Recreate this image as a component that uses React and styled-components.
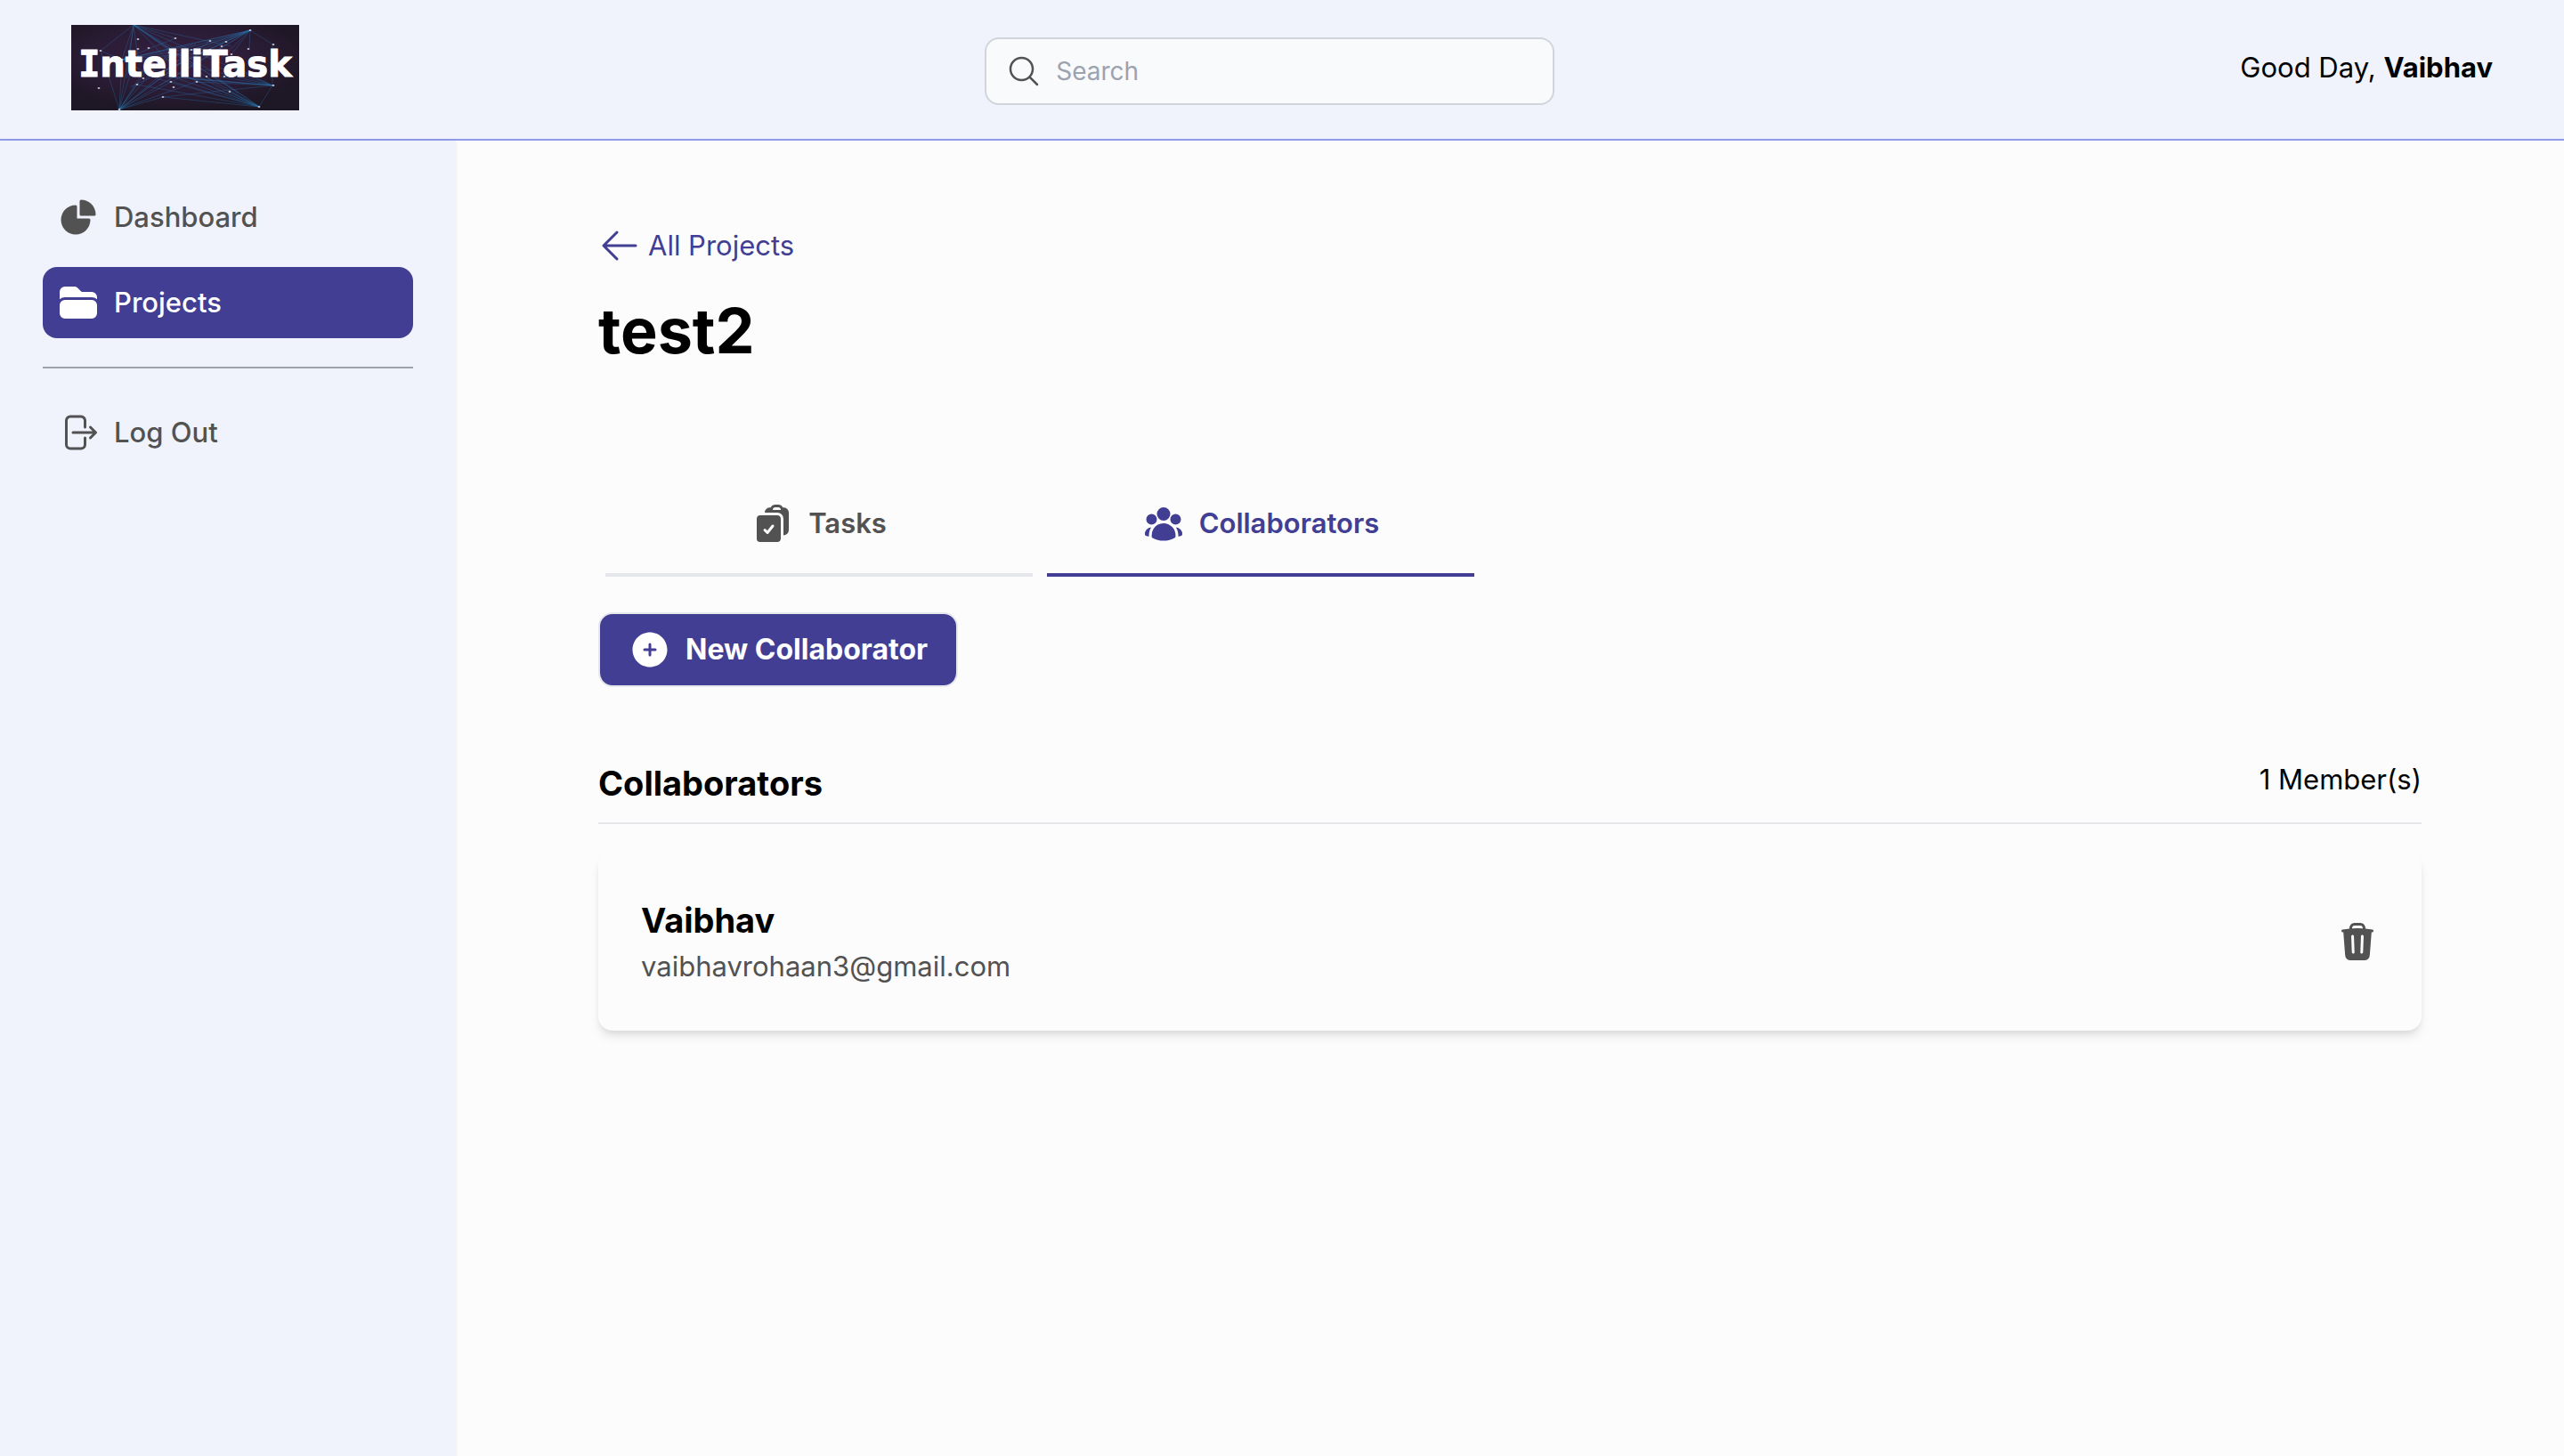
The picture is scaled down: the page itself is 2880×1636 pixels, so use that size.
import React from "react";
import styled, { createGlobalStyle } from "styled-components";
import {
  HiChartPie,
  HiFolder,
  HiOutlineArrowRightOnRectangle,
  HiOutlineArrowLeft,
  HiOutlineMagnifyingGlass,
  HiClipboardDocumentCheck,
  HiUserGroup,
  HiPlusCircle,
  HiTrash,
} from "react-icons/hi2";

const color = {
  brand: "#413e93",
  panel: "#f0f3fc",
  page: "#fcfcfc",
  muted: "#525252",
  line: "#e5e7eb",
};

const GlobalStyle = createGlobalStyle`
  *, *::before, *::after { box-sizing: border-box; }
  body {
    margin: 0;
    background: ${color.page};
    color: #000;
    font-family: Inter, "Liberation Sans", sans-serif;
    font-size: 31px;
    line-height: 48px;
  }
  h1, h2, h3, p, ul { margin: 0; padding: 0; }
  ul { list-style: none; }
  a { color: inherit; text-decoration: none; }
  button, input { font: inherit; }
  svg { display: block; flex: none; }
`;

const Page = styled.div`
  display: flex;
  flex-direction: column;
  min-height: 100vh;
`;

const Header = styled.header`
  display: flex;
  align-items: center;
  justify-content: space-between;
  padding: 28px 80px 32px;
  background: ${color.panel};
  border-bottom: 2px solid #8f9be8;
`;

const SearchBox = styled.label`
  display: flex;
  align-items: center;
  gap: 16px;
  width: 640px;
  height: 76px;
  margin-top: 8px;
  padding: 0 22px;
  background: #f9fafb;
  border: 2px solid #d1d5db;
  border-radius: 16px;
  color: ${color.muted};
`;

const SearchInput = styled.input`
  flex: 1;
  min-width: 0;
  padding: 0;
  border: 0;
  outline: 0;
  background: transparent;
  font-size: 28px;
  line-height: 40px;
  &::placeholder { color: #9ca3af; opacity: 1; }
`;

const Body = styled.div`
  display: flex;
  flex: 1;
`;

const Sidebar = styled.nav`
  flex: none;
  width: 512px;
  padding: 46px 48px;
  background: ${color.panel};
  box-shadow: 0 2px 4px rgba(0, 0, 0, 0.08);
`;

const NavList = styled.ul`
  display: grid;
  gap: 16px;
  & + & {
    margin-top: 32px;
    padding-top: 32px;
    border-top: 2px solid #9ca3af;
  }
`;

const NavLink = styled.a`
  display: flex;
  align-items: center;
  gap: 16px;
  padding: 16px;
  border-radius: 16px;
  font-weight: 500;
  background: ${(p) => (p.$active ? color.brand : "transparent")};
  && { color: ${(p) => (p.$active ? "#fff" : color.muted)}; }
`;

const Main = styled.main`
  flex: 1;
  min-width: 0;
  padding: 94px 160px;
`;

const BackLink = styled.a`
  display: flex;
  align-items: center;
  gap: 8px;
  width: fit-content;
  && { color: ${color.brand}; }
`;

const Title = styled.h1`
  margin-top: 32px;
  font-size: 70px;
  line-height: 80px;
  font-weight: 700;
`;

const Tabs = styled.div`
  display: flex;
  gap: 16px;
  margin-top: 120px;
  padding: 0 8px;
`;

const Tab = styled.button`
  display: flex;
  align-items: center;
  justify-content: center;
  gap: 16px;
  width: 480px;
  padding: 32px 0;
  border: 0;
  border-bottom: 4px solid ${(p) => (p.$active ? color.brand : color.line)};
  background: transparent;
  color: ${(p) => (p.$active ? color.brand : color.muted)};
  font-weight: 600;
`;

const PrimaryButton = styled.button`
  display: flex;
  align-items: center;
  gap: 16px;
  margin-top: 40px;
  padding: 16px 32px;
  background: ${color.brand};
  border: 2px solid ${color.line};
  border-radius: 16px;
  color: #fff;
  font-size: 32px;
  font-weight: 700;
`;

const SectionHeader = styled.div`
  display: flex;
  justify-content: space-between;
  align-items: flex-start;
  margin-top: 80px;
  padding-bottom: 16px;
  border-bottom: 2px solid ${color.line};
`;

const SectionTitle = styled.h2`
  font-size: 38px;
  line-height: 56px;
  font-weight: 700;
`;

const Card = styled.article`
  display: flex;
  align-items: center;
  justify-content: space-between;
  margin-top: 32px;
  padding: 48px;
  background: ${color.page};
  border-radius: 16px;
  box-shadow: 0 8px 12px -2px rgba(0, 0, 0, 0.1), 0 4px 8px -4px rgba(0, 0, 0, 0.1);
`;

const MemberName = styled.h3`
  font-size: 38px;
  line-height: 56px;
  font-weight: 700;
`;

const MemberEmail = styled.p`
  color: ${color.muted};
`;

const IconButton = styled.button`
  padding: 0;
  border: 0;
  background: transparent;
  color: ${color.muted};
`;

const hubs = [
  { at: [70, 0], spread: [[33, 29], [57, 39], [75, 38], [110, 41], [140, 48], [160, 64], [188, 77], [212, 92], [226, 68], [117, 15], [180, 24], [62, 60], [172, 60]] },
  { at: [201, 6], spread: [[57, 39], [80, 46], [92, 57], [112, 31], [126, 31], [145, 28], [160, 46], [180, 33], [200, 27], [66, 70], [100, 68], [135, 36], [228, 23]] },
  { at: [54, 95], spread: [[57, 39], [70, 2], [75, 27], [85, 46], [94, 38], [110, 31], [126, 40], [135, 28], [140, 64], [156, 18], [201, 6], [120, 60], [33, 29], [74, 67], [103, 81]] },
  { at: [211, 92], spread: [[95, 60], [110, 50], [115, 64], [130, 58], [141, 57], [152, 59], [165, 60], [103, 81], [178, 75], [74, 67], [226, 68], [90, 50]] },
  { at: [226, 68], spread: [[92, 57], [115, 58], [137, 61], [150, 50], [160, 46], [172, 59], [226, 23], [175, 43], [103, 81], [140, 64]] },
  { at: [57, 39], spread: [[110, 31], [126, 40], [117, 15], [140, 22], [160, 30], [201, 6], [33, 29], [95, 60]] },
];

const stars = [
  [33, 29], [75, 16], [117, 15], [156, 18], [174, 19], [201, 6], [227, 22], [65, 30], [75, 27],
  [87, 26], [110, 31], [127, 31], [135, 28], [169, 24], [180, 33], [199, 27], [156, 28], [57, 39],
  [94, 37], [31, 71], [74, 67], [81, 60], [112, 64], [115, 58], [142, 57], [152, 58], [141, 64],
  [172, 58], [178, 75], [227, 68], [103, 81], [211, 92], [54, 95], [115, 70],
];

function Logo() {
  return (
    <svg width="256" height="96" viewBox="0 0 256 96" role="img" aria-label="IntelliTask">
      <defs>
        <radialGradient id="night" cx="0.45" cy="0.4" r="0.6">
          <stop offset="0" stopColor="#352142" />
          <stop offset="0.6" stopColor="#2b1c36" />
          <stop offset="1" stopColor="#1e1725" />
        </radialGradient>
      </defs>
      <rect width="256" height="96" fill="url(#night)" />
      {hubs.map(({ at, spread }) =>
        spread.map(([x, y], i) => (
          <line key={`${at}-${i}`} x1={at[0]} y1={at[1]} x2={x} y2={y} stroke="#2b78b8" strokeWidth="0.8" opacity="0.4" />
        ))
      )}
      {stars.map(([x, y]) => (
        <ellipse key={`${x}-${y}`} cx={x} cy={y} rx="1.4" ry="0.9" fill="#d5dde6" opacity="0.85" />
      ))}
      <text x="128" y="58" textAnchor="middle" fill="#fff" stroke="#fff" strokeWidth="1" fontFamily="DejaVu Sans, sans-serif" fontWeight="700" fontSize="40">
        <tspan fontFamily="DejaVu Sans Mono, monospace">I</tspan>ntelliTask
      </text>
    </svg>
  );
}

const ICON = 48;

export default function App() {
  return (
    <>
      <GlobalStyle />
      <Page>
        <Header>
          <a href="#home"><Logo /></a>
          <SearchBox>
            <HiOutlineMagnifyingGlass size={40} aria-hidden="true" />
            <SearchInput type="search" placeholder="Search" aria-label="Search" />
          </SearchBox>
          <p>Good Day, <b>Vaibhav</b></p>
        </Header>
        <Body>
          <Sidebar>
            <NavList>
              <li><NavLink href="#dashboard"><HiChartPie size={ICON} />Dashboard</NavLink></li>
              <li><NavLink href="#projects" $active aria-current="page"><HiFolder size={ICON} />Projects</NavLink></li>
            </NavList>
            <NavList>
              <li><NavLink href="#logout"><HiOutlineArrowRightOnRectangle size={ICON} />Log Out</NavLink></li>
            </NavList>
          </Sidebar>
          <Main>
            <BackLink href="#projects"><HiOutlineArrowLeft size={ICON} />All Projects</BackLink>
            <Title>test2</Title>
            <Tabs role="tablist">
              <Tab type="button" role="tab" aria-selected="false"><HiClipboardDocumentCheck size={ICON} />Tasks</Tab>
              <Tab type="button" role="tab" aria-selected="true" $active><HiUserGroup size={ICON} />Collaborators</Tab>
            </Tabs>
            <PrimaryButton type="button"><HiPlusCircle size={ICON} />New Collaborator</PrimaryButton>
            <SectionHeader>
              <SectionTitle>Collaborators</SectionTitle>
              <p>1 Member(s)</p>
            </SectionHeader>
            <Card>
              <div>
                <MemberName>Vaibhav</MemberName>
                <MemberEmail>vaibhavrohaan3@gmail.com</MemberEmail>
              </div>
              <IconButton type="button" aria-label="Remove Vaibhav"><HiTrash size={ICON} /></IconButton>
            </Card>
          </Main>
        </Body>
      </Page>
    </>
  );
}
